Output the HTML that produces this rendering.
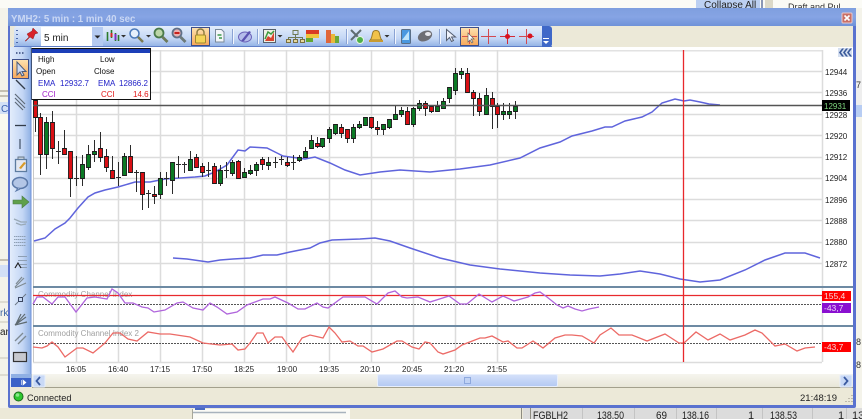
<!DOCTYPE html>
<html><head><meta charset="utf-8"><style>
html,body{margin:0;padding:0}
body{width:862px;height:419px;overflow:hidden;background:#f3f1e8;position:relative;font-family:"Liberation Sans",sans-serif}
svg{position:absolute;left:0;top:0;filter:blur(.35px)}
text{font-family:"Liberation Sans",sans-serif}
</style></head><body>
<svg width="862" height="419" viewBox="0 0 862 419">
<defs>
<linearGradient id="tb" x1="0" y1="0" x2="0" y2="1"><stop offset="0" stop-color="#7f9fdf"/><stop offset=".5" stop-color="#86a4e4"/><stop offset="1" stop-color="#6f92d8"/></linearGradient>
<linearGradient id="tool" x1="0" y1="0" x2="0" y2="1"><stop offset="0" stop-color="#e3edfb"/><stop offset=".6" stop-color="#c3d6f5"/><stop offset="1" stop-color="#8fb0e4"/></linearGradient>
<linearGradient id="side" x1="0" y1="0" x2="1" y2="0"><stop offset="0" stop-color="#e3edfb"/><stop offset=".6" stop-color="#c3d6f5"/><stop offset="1" stop-color="#8fb0e4"/></linearGradient>
<linearGradient id="or" x1="0" y1="0" x2="0" y2="1"><stop offset="0" stop-color="#fde2b0"/><stop offset="1" stop-color="#f7a85a"/></linearGradient>
<linearGradient id="sc" x1="0" y1="0" x2="0" y2="1"><stop offset="0" stop-color="#f6f5ee"/><stop offset="1" stop-color="#e8e6d8"/></linearGradient>
<linearGradient id="th" x1="0" y1="0" x2="0" y2="1"><stop offset="0" stop-color="#d5e1fa"/><stop offset="1" stop-color="#b3c9f3"/></linearGradient>
</defs>

<!-- underlying app -->
<rect x="0" y="0" width="862" height="419" fill="#f4f3ea"/>
<rect x="0" y="0" width="862" height="8" fill="#fbfbf6"/>
<rect x="696" y="0" width="64" height="8" fill="#bcd0f2"/>
<rect x="761" y="0" width="2" height="8" fill="#8a97b5"/>
<rect x="765" y="0" width="8" height="8" fill="#dcd9c8"/>
<text x="704" y="8" font-size="10" fill="#222">Collapse All</text>
<text x="788" y="10" font-size="9" fill="#333">Draft and Pul</text>
<path d="M0 91H8M0 96H8" stroke="#b5b0a0" stroke-width="1.5"/>
<rect x="0" y="102" width="8" height="12" fill="#d3e0f6"/>
<text x="1" y="112" font-size="10" fill="#3c63b0">C</text>
<rect x="0" y="114" width="8" height="16" fill="#faf9f0"/>
<path d="M0 260H8M0 266H8" stroke="#b5b0a0" stroke-width="1.5"/>
<rect x="0" y="265" width="8" height="12" fill="#d3e0f6"/>
<text x="0" y="316" font-size="10" fill="#3c63a0">rk</text>
<text x="0" y="335" font-size="10" fill="#222">ar</text>
<path d="M0 302H8M0 322H8M0 358H8M0 375H8" stroke="#c8c6b8"/>
<rect x="856" y="70" width="6" height="40" fill="#eeeeee"/>
<rect x="856" y="105" width="6" height="12" fill="#b8cdf3"/>
<text x="856" y="88" font-size="9" fill="#333">7</text>
<text x="856" y="345" font-size="9" fill="#333">8</text>
<text x="856" y="368" font-size="9" fill="#333">8</text>
<!-- bottom row -->
<rect x="0" y="408" width="862" height="11" fill="#ece9d8"/>
<rect x="192" y="409" width="158" height="10" fill="#fbfbf6"/>
<path d="M192.500 409V419" stroke="#a8a89a"/>
<rect x="195" y="407" width="10" height="3" fill="#4a6ac0"/>
<path d="M193 412.500H346" stroke="#a8b3bd" stroke-width="1.500"/>
<rect x="523" y="408" width="339" height="11" fill="#dcdcdc"/>
<path d="M521.500 408V419M530.500 408V419" stroke="#8d8b80"/>
<path d="M582.500 408V419M634.500 408V419M676.500 408V419M716.500 408V419M762.500 408V419M812.500 408V419M846.500 408V419" stroke="#c4c4c4"/>
<g font-size="11" fill="#222">
<text x="533" y="419" textLength="35" lengthAdjust="spacingAndGlyphs">FGBLH2</text>
<text x="597" y="419" textLength="27" lengthAdjust="spacingAndGlyphs">138.50</text>
<text x="656" y="419" textLength="11" lengthAdjust="spacingAndGlyphs">69</text>
<text x="682" y="419" textLength="27" lengthAdjust="spacingAndGlyphs">138.16</text>
<text x="748" y="419">1</text>
<text x="770" y="419" textLength="27" lengthAdjust="spacingAndGlyphs">138.53</text>
<text x="838" y="419">1</text>
<text x="852" y="419">13</text>
</g>

<!-- window -->
<rect x="8" y="8" width="848" height="400" rx="2" fill="#5a72cf"/>
<rect x="8" y="8" width="848" height="18" fill="url(#tb)"/>
<text x="11" y="22" font-size="9.700" font-weight="bold" fill="#c9d7f4">YMH2: 5 min : 1 min 40 sec</text>
<rect x="842" y="13" width="10" height="10" rx="1" fill="#c96f66" stroke="#e9c7c8"/>
<path d="M844.500 15.500l5 5M849.500 15.500l-5 5" stroke="#fff" stroke-width="1.600"/>
<rect x="10" y="26" width="843" height="379" fill="#ece9d8"/>

<!-- toolbar -->
<rect x="14" y="26" width="538" height="21" rx="3" fill="url(#tool)"/>
<path d="M14 46.500H552" stroke="#5f7fc8"/>
<path d="M17 30v1M17 34v1M17 38v1M17 42v1" stroke="#2f4f99" stroke-width="1.600"/>
<path d="M25 41l4-4-2-3 5-3 1-3 3 3 2 2-3 1-2 5-3-2-4 4z" fill="#d8232a" stroke="#8a2a2a" stroke-width=".5"/>
<rect x="41" y="27" width="52" height="19" fill="#fff"/>
<rect x="92" y="27" width="11" height="19" fill="#b5caf0"/>
<path d="M94.500 35.500h6l-3 3z" fill="#222"/>
<text x="44" y="41" font-size="10" fill="#222">5 min</text>
<!-- candles icon -->
<path d="M107.500 32V41M111.500 30V38M115.500 33V41M118.500 35V41" stroke="#2b7a2b" stroke-width="1.600"/>
<path d="M111.500 33V37" stroke="#d4261f" stroke-width="2"/><path d="M115.500 34V40" stroke="#7b2fbf" stroke-width="2"/>
<path d="M121 35h5l-2.500 2.500z" fill="#333"/>
<circle cx="134.500" cy="33.500" r="4.500" fill="#e6f0fb" stroke="#4a78b8" stroke-width="1.500"/><path d="M138 37l5 5" stroke="#7a7a50" stroke-width="2.500"/>
<path d="M146 35h5l-2.500 2.500z" fill="#333"/>
<circle cx="159" cy="33" r="4.500" fill="#bcd6a8" stroke="#4a7a4a" stroke-width="1.800"/><path d="M162.500 37l5 5" stroke="#6c7a5a" stroke-width="2.800"/>
<circle cx="177" cy="33" r="4.500" fill="#e9b0b0" stroke="#5f7088" stroke-width="1.800"/><path d="M174.500 33h5" stroke="#c8201c" stroke-width="2"/><path d="M180.500 37l5 5" stroke="#6c7a7a" stroke-width="2.800"/>
<rect x="191.500" y="27.500" width="18" height="18" fill="url(#or)" stroke="#3e4f8a"/>
<path d="M197 36v-3.500a3.500 3.500 0 0 1 7 0V36" fill="none" stroke="#8a7a40" stroke-width="1.400"/><rect x="195.500" y="35" width="10" height="8" rx="1" fill="#f4d458" stroke="#a08a30"/>
<path d="M215.500 29.500h6l2.500 2.500v10h-8.500z" fill="#f4f6fa" stroke="#7a8a9a"/><path d="M217.500 35h4M219 38h3" stroke="#3c9a4a" stroke-width="1.400"/>
<path d="M232.500 29V44" stroke="#8aa3d4"/><path d="M233.500 29V44" stroke="#f2f6fd"/>
<ellipse cx="245" cy="37" rx="6.500" ry="5" fill="#b4bcea" stroke="#6a62b8"/><path d="M241 41l8-10 2 1-7 9" fill="#5a52b0"/>
<path d="M257.500 29V44" stroke="#8aa3d4"/><path d="M258.500 29V44" stroke="#f2f6fd"/>
<rect x="263.500" y="29.500" width="12" height="13" fill="#eef0e4" stroke="#55606c"/><path d="M265 41l3-5 3 2 3-6v9z" fill="#d8452f"/><path d="M265 39l3-7 3 2 3-3" stroke="#3c9a3c" stroke-width="1.500" fill="none"/>
<path d="M277.500 35h5l-2.500 2.500z" fill="#333"/>
<path d="M293 30.500h5v4h-5zM295.500 34.500v3M288 37.500h15M288.500 37.500v2M295.500 37.500v2M302.500 37.500v2" fill="none" stroke="#6f7a55"/><path d="M286.500 39.500h4v3h-4zM293.500 39.500h4v3h-4zM300.500 39.500h4v3h-4z" fill="#e6d9a0" stroke="#7a7040"/>
<rect x="306" y="30" width="13" height="4" fill="#d93a24"/><rect x="306" y="34" width="13" height="4" fill="#f0c23c"/><rect x="306" y="38" width="7" height="4" fill="#62a832"/>
<rect x="326" y="30" width="5" height="13" fill="#e0663a"/><rect x="331" y="34" width="4" height="9" fill="#e8b83c"/><rect x="335" y="36" width="4" height="7" fill="#6aa838"/>
<path d="M346.500 29V44" stroke="#8aa3d4"/><path d="M347.500 29V44" stroke="#f2f6fd"/>
<path d="M351 30l10 10M361 30l-10 10" stroke="#5e6c70" stroke-width="2"/><circle cx="360" cy="40" r="3.500" fill="#4eb04a" stroke="#e6f5e0"/>
<path d="M370 40c2-1 2-6 3-8 1-2 5-2 6 0 1 2 1 7 3 8z" fill="#f1c24a" stroke="#9a7a2a"/><rect x="369" y="40" width="14" height="2" fill="#c89a30"/>
<path d="M384.500 35h5l-2.500 2.500z" fill="#333"/>
<path d="M394.500 29V44" stroke="#8aa3d4"/><path d="M395.500 29V44" stroke="#f2f6fd"/>
<rect x="401.500" y="29.500" width="9" height="14" rx="1" fill="#4a98e0" stroke="#5a6f88"/><path d="M402 40l7-9v9z" fill="#bfe4fb"/>
<ellipse cx="425" cy="36" rx="7.500" ry="5" transform="rotate(-25 425 36)" fill="#6e6e74"/><ellipse cx="428" cy="34" rx="3" ry="2" fill="#e8e8ee"/>
<path d="M439.500 29V44" stroke="#8aa3d4"/><path d="M440.500 29V44" stroke="#f2f6fd"/>
<path d="M446.500 29.500v11l3-3 2 4 2-1-2-3.500h4z" fill="#eef2fb" stroke="#565f70"/>
<rect x="460.500" y="27.500" width="18" height="18" fill="url(#or)" stroke="#3e4f8a"/>
<path d="M469.500 29V44M462 36.500H477" stroke="#d9544a"/><path d="M468 33v9l2-2 2 3 1-1-2-3h3z" fill="#fff" stroke="#666" stroke-width=".7"/>
<path d="M488.500 29V44M481 36.500H496" stroke="#d24a50"/>
<path d="M507.500 29V44M500 36.500H515" stroke="#d42a34"/><circle cx="507.500" cy="36.500" r="2.500" fill="#d8121e"/>
<path d="M526.500 29V44M519 36.500H534" stroke="#d24a50"/><circle cx="530" cy="36" r="2.500" fill="#d8121e"/>
<path d="M542 26h7a3 3 0 0 1 3 3v15a3 3 0 0 1-3 3h-7z" fill="#3f68c8"/>
<rect x="543" y="38" width="6" height="1" fill="#fff"/><path d="M543 41h6l-3 3z" fill="#fff"/>
<rect x="552" y="26" width="301" height="21" fill="#ece9d8"/>

<!-- chart -->
<rect x="31" y="47" width="822" height="327" fill="#fff"/>
<rect x="33" y="50" width="790" height="1.500" fill="#e2e2e2"/>
<path d="M76.500 50V362M118.500 50V362M160.500 50V362M202.500 50V362M244.500 50V362M286.500 50V362M329.500 50V362M371.500 50V362M413.500 50V362M455.500 50V362M497.500 50V362M822.500 50V362" stroke="#dcdcdc" stroke-width="1.500"/>
<path d="M33 71.500H822M33 92.500H822M33 114.500H822M33 135.500H822M33 157.500H822M33 178.500H822M33 199.500H822M33 220.500H822M33 242.500H822M33 263.500H822M33 362.500H822" stroke="#dcdcdc" stroke-width="1.500"/>
<path d="M33.500 50V362" stroke="#c8c8c8"/>

<!-- second blue -->
<path fill="none" stroke="#5f64dc" stroke-width="1.500" d="M173 258L187 259 208 262 220 260 233 259 250 258 263 255 277 255 290 252 310 248 320 243 332 240 360 239 375 238 390 241 410 248 440 258 470 265 500 269 540 273 570 275 600 276 620 274 640 271 660 274 680 279 700 282 720 280 745 270 765 260 785 253 805 253 820 258"/>
<!-- main blue -->
<path fill="none" stroke="#5f64dc" stroke-width="1.500" d="M34 241L45 238 55 229 65 223 70 218 78 208 88 197 95 193 105 190 118 187 135 182 150 182 165 179 180 178 195 177 205 176 215 172 227 165 238 150 245 151 250 147 267 148 277 153 283 156 290 157 305 159 315 157 330 163 345 170 360 175 380 172 400 170 430 172 460 169 490 165 520 158 540 148 560 142 572 136 592 131 605 127 612 127 625 121 642 117 652 112 662 103 675 99 684 101 690 100 700 102 709 104 720 105"/>

<!-- wicks -->
<path fill="none" stroke="#2b2b2b" d="M35.500 100V132M40.500 113V175M46.500 117V169M52.500 111V159M58.500 141V164M64.500 130V154M70.500 151V197M76.500 156V186M82.500 155V186M88.500 145V170M94.500 140V162M100.500 132V162M106.500 149V172M112.500 156V178M118.500 162V186M124.500 153V175M130.500 145V172M136.500 170V192M142.500 172V210M148.500 190V208M154.500 186V204M160.500 172V199M166.500 172V186M172.500 162V194M178.500 156V178M184.500 162V173M190.500 151V171M196.500 154V167M202.500 163V177M208.500 162V177M214.500 163V184M220.500 165V186M226.500 162V178M232.500 160V176M238.500 160V178M244.500 168V177M250.500 165V175M256.500 162V176M262.500 157V170M268.500 157V170M275.500 157V168M281.500 156V165M287.500 157V167M293.500 155V170M299.500 155V162M305.500 147V157M311.500 135V148M317.500 137V148M322.500 138V148M329.500 127V143M335.500 124V135M341.500 124V138M347.500 129V143M353.500 124V143M359.500 121V129M365.500 117V125M371.500 117V129M377.500 121V135M383.500 124V135M389.500 119V129M395.500 106V119M401.500 107V117M407.500 107V124M413.500 107V127M419.500 100V111M425.500 101V116M431.500 106V113M437.500 101V112M443.500 98V108M449.500 87V103M455.500 68V95M461.500 68V79M467.500 68V92M473.500 90V116M479.500 93V116M486.500 88V114M492.500 92V129M497.500 103V128M503.500 103V120M509.500 103V119M515.500 101V119M56 151.500h5M74 178.500h5M116 177.500h5M134 172.500h5M146 193.500h5M164 178.500h5M176 164.500h5M182 164.500h5M206 170.500h5M224 170.500h5M273 162.500h5M279 159.500h5M291 162.500h5"/>
<!-- green bodies -->
<path fill="#0b7a24" stroke="#1c1c1c" stroke-width=".9" d="M44.500 122.500h4v32h-4zM80.500 164.500h4v14h-4zM86.500 154.500h4v13h-4zM92.500 151.500h4v3h-4zM122.500 156.500h4v19h-4zM158.500 178.500h4v16h-4zM170.500 162.500h4v18h-4zM188.500 159.500h4v11h-4zM218.500 170.500h4v13h-4zM230.500 162.500h4v11h-4zM242.500 172.500h4v5h-4zM248.500 170.500h4v3h-4zM254.500 164.500h4v6h-4zM266.500 162.500h4v3h-4zM297.500 157.500h4v3h-4zM303.500 151.500h4v6h-4zM309.500 140.500h4v8h-4zM320.500 138.500h4v8h-4zM327.500 129.500h4v9h-4zM333.500 124.500h4v9h-4zM351.500 127.500h4v11h-4zM357.500 124.500h4v3h-4zM363.500 117.500h4v8h-4zM381.500 124.500h4v5h-4zM387.500 119.500h4v8h-4zM393.500 114.500h4v5h-4zM399.500 110.500h4v4h-4zM411.500 108.500h4v16h-4zM417.500 103.500h4v5h-4zM435.500 106.500h4v5h-4zM441.500 101.500h4v7h-4zM447.500 87.500h4v11h-4zM453.500 73.500h4v17h-4zM459.500 71.500h4v3h-4zM484.500 95.500h4v19h-4zM501.500 111.500h4v3h-4zM507.500 111.500h4v3h-4zM513.500 106.500h4v5h-4z"/>
<!-- red bodies -->
<path fill="#d90f14" stroke="#1c1c1c" stroke-width=".9" d="M33.500 100.500h4v17h-4zM38.500 117.500h4v37h-4zM50.500 122.500h4v26h-4zM62.500 148.500h4v6h-4zM68.500 151.500h4v27h-4zM98.500 148.500h4v9h-4zM104.500 156.500h4v11h-4zM110.500 170.500h4v8h-4zM128.500 156.500h4v16h-4zM140.500 172.500h4v22h-4zM152.500 194.500h4v2h-4zM194.500 157.500h4v10h-4zM200.500 166.500h4v6h-4zM212.500 166.500h4v17h-4zM236.500 161.500h4v17h-4zM260.500 159.500h4v5h-4zM285.500 162.500h4v3h-4zM315.500 143.500h4v3h-4zM339.500 127.500h4v6h-4zM345.500 129.500h4v9h-4zM369.500 117.500h4v10h-4zM375.500 127.500h4v2h-4zM405.500 111.500h4v13h-4zM423.500 103.500h4v5h-4zM429.500 106.500h4v5h-4zM465.500 73.500h4v19h-4zM471.500 92.500h4v6h-4zM477.500 98.500h4v13h-4zM490.500 98.500h4v8h-4zM495.500 106.500h4v8h-4z"/>

<!-- price line -->
<path d="M33 105.500H823" stroke="#555" stroke-width="1.500"/>

<!-- panels -->
<rect x="33" y="286" width="820" height="2" fill="#6d8aa3"/>
<rect x="33" y="325" width="820" height="2" fill="#6d8aa3"/>
<text x="38" y="297" font-size="8" fill="#a0a0a0">Commodity Channel Index</text>
<text x="38" y="336" font-size="8" fill="#a0a0a0">Commodity Channel Index 2</text>
<path d="M33 304.500H822M33 343.500H822" stroke="#555" stroke-dasharray="2 1"/>
<path d="M33 295.500H822" stroke="#e82a2e" stroke-width="1.300"/>
<path fill="none" stroke="#b065dc" stroke-width="1.300" d="M33 304L37 297 43 297 52 304 58 297 65 297 76 312 87 298 95 297 107 299 112 289 118 293 125 303 133 303 142 307 148 308 154 312 165 310 177 303 183 302 193 308 203 310 210 303 217 307 227 314 237 312 247 305 263 299 270 299 275 297 288 303 298 309 305 309 317 303 323 307 328 308 343 297 365 297 377 304 388 293 395 291 402 297 407 298 418 297 430 302 449 296 460 304 467 304 479 294 492 302 503 296 514 301 528 297 535 293 540 292 547 297 557 305 563 308 568 306 575 309 582 311 589 309 599 307"/>
<path fill="none" stroke="#ec6a66" stroke-width="1.300" d="M33 347L42 348 47 346 52 342 58 347 65 357 77 348 83 348 93 353 105 343 113 333 120 333 128 339 137 341 148 332 160 334 170 334 190 337 203 343 220 345 232 344 238 350 245 349 250 343 257 333 263 333 268 343 275 337 282 337 290 348 293 352 302 338 310 335 323 338 329 327 335 333 342 342 350 341 358 346 363 346 372 352 383 349 397 341 402 341 412 347 419 349 425 342 430 343 438 352 443 354 455 350 462 345 480 338 485 338 492 336 503 342 508 341 517 348 522 348 533 341 543 348 555 338 565 335 572 335 582 336 594 343 600 335 611 328 619 335 632 335 647 341 665 334 679 343 684 343 696 332 708 340 720 334 730 340 745 335 755 330 762 333 775 346 785 344 797 351 805 348 815 347"/>

<!-- red vertical cursor -->
<path d="M683.500 50V362" stroke="#e8282c" stroke-width="1.300"/>

<!-- axis -->
<rect x="838" y="48" width="14" height="9" fill="#d5dff0"/>
<path d="M842 48.500l-3 4 3 4h2l-3-4 3-4zM846 48.500l-3 4 3 4h2l-3-4 3-4zM850 48.500l-3 4 3 4h2l-3-4 3-4z" fill="#3a5a9a"/>
<g font-size="8" fill="#222">
<text x="825" y="75">12944</text>
<text x="825" y="96">12936</text>
<text x="825" y="118">12928</text>
<text x="825" y="139">12920</text>
<text x="825" y="160">12912</text>
<text x="825" y="181">12904</text>
<text x="825" y="203">12896</text>
<text x="825" y="224">12888</text>
<text x="825" y="245">12880</text>
<text x="825" y="267">12872</text>
</g>
<rect x="822" y="100" width="28" height="11" fill="#000"/>
<text x="824" y="109" font-size="8" fill="#7fd87f">12931</text>
<rect x="822" y="291" width="29" height="10" fill="#f00"/>
<text x="824" y="299" font-size="8.500" fill="#f5dada">155,4</text>
<rect x="822" y="303" width="29" height="10" fill="#8a10d0"/>
<text x="824" y="311" font-size="8.500" fill="#ecd8f6">-43,7</text>
<rect x="822" y="342" width="29" height="10" fill="#f00"/>
<text x="824" y="350" font-size="8.500" fill="#f5dada">-43,7</text>

<g font-size="8" fill="#222">
<text x="66" y="372">16:05</text>
<text x="108" y="372">16:40</text>
<text x="150" y="372">17:15</text>
<text x="192" y="372">17:50</text>
<text x="234" y="372">18:25</text>
<text x="277" y="372">19:00</text>
<text x="319" y="372">19:35</text>
<text x="360" y="372">20:10</text>
<text x="402" y="372">20:45</text>
<text x="444" y="372">21:20</text>
<text x="487" y="372">21:55</text>
</g>

<!-- tooltip -->
<rect x="31.500" y="48.500" width="119" height="51" fill="#fff" stroke="#111"/>
<rect x="32" y="49" width="118" height="4" fill="#1c3fb8"/>
<g font-size="8">
<text x="38" y="62" fill="#111">High</text>
<text x="100" y="62" fill="#111">Low</text>
<text x="36" y="74" fill="#111">Open</text>
<text x="94" y="74" fill="#111">Close</text>
<text x="38" y="86" fill="#2222c8">EMA</text>
<text x="60" y="86" fill="#2222c8">12932.7</text>
<text x="98" y="86" fill="#2222c8">EMA</text>
<text x="119" y="86" fill="#2222c8">12866.2</text>
<text x="42" y="97" fill="#a020c8">CCI</text>
<text x="101" y="97" fill="#e01818">CCI</text>
<text x="133" y="97" fill="#e01818">14.6</text>
</g>

<!-- left toolbar -->
<rect x="10" y="47" width="21" height="340" fill="url(#side)"/>
<path d="M31 47V387" stroke="#6f92d8"/>
<rect x="11" y="378" width="20" height="9" fill="#3a62c8"/>
<rect x="11" y="374" width="20" height="4" fill="#8fb0e4"/>
<path d="M23 380v5l3-2.500zM21.500 380v5" fill="#fff" stroke="#fff" stroke-width=".6"/>
<path d="M16 53h1.500M19 53h1.500M22 53h1.500" stroke="#33467a" stroke-width="1.500"/>
<rect x="12.500" y="59.500" width="16" height="19" fill="url(#or)" stroke="#3e4f8a"/>
<path d="M17 62v13l3-3 2 4 2-1-2-3.500h4z" fill="#cdd9f0" stroke="#4a5a78"/>
<path d="M16 80l9 9" stroke="#333c4a" stroke-width="1.300"/>
<path d="M15 94l10 10M15 98l10 10M15 102l8 8" stroke="#5f6b78" stroke-width="1.200"/>
<path d="M15 125.500H26" stroke="#333c4a" stroke-width="1.300"/>
<path d="M20 139V149" stroke="#5b6b80" stroke-width="1.500"/>
<path d="M15.500 159.500h11v12h-11z" fill="#e3e8f2" stroke="#5d7ca0" stroke-width="1.300"/>
<path d="M18 159v-2h6v2" fill="#c0ccd8" stroke="#6a7a8a"/>
<path d="M19 168l5-6 2 1-5 6z" fill="#d89a28"/>
<ellipse cx="20" cy="183" rx="7.500" ry="5.500" fill="#b3c6e6" stroke="#5b79a8" stroke-width="1.500"/>
<path d="M18 188l-2 3 4-2" fill="#b3c6e6" stroke="#5b79a8"/>
<path d="M13 200h9v-4l7 6-7 6v-4h-9z" fill="#5fa04a" stroke="#4a7a48" stroke-width=".6"/>
<path d="M14 219l7 3 6 0M16 223l5 2 5-1" stroke="#99a9b6" stroke-width="1.300" fill="none"/>
<path d="M14 236.500H26M14 239.500H26M14 242.500H26M14 245.500H26" stroke="#8e9fb4" stroke-dasharray="1.500 .5"/>
<path d="M18 256.500H27M18 260.500H27M20 264.500H27M20 267.500H27" stroke="#8e9fb4"/>
<path d="M15 268l3-5 3 5" fill="none" stroke="#222" stroke-width="1.200"/>
<path d="M15 287l9-9M15 288l11-5M16 284l6-7" stroke="#7e8a92" stroke-width="1.200"/>
<path d="M15 305l3-3" stroke="#6e7a88"/><rect x="18.500" y="297.500" width="4" height="4" fill="none" stroke="#3a4660"/><path d="M23 297l3-3" stroke="#6e7a88"/>
<path d="M15 325l10-11M15 325l11-8M15 325l12-3M16 324l5-10" stroke="#5e6a70" stroke-width="1.200"/>
<path d="M15 341l8-8M18 344l8-8" stroke="#7e8a92" stroke-width="1.300"/>
<rect x="13.500" y="352.500" width="13" height="9" fill="#c7c9cf" stroke="#333" stroke-width="1.200"/>

<!-- scrollbar -->
<rect x="32" y="374" width="821" height="13" fill="url(#sc)"/>
<path d="M32 387.500H853" stroke="#a3a08c"/>
<rect x="33" y="375" width="12" height="12" rx="1" fill="#c9d9f6" stroke="#e5edfb"/>
<path d="M40 377l-3.500 4 3.500 4" fill="none" stroke="#3a5aa0" stroke-width="1.800"/>
<rect x="840" y="375" width="12" height="12" rx="1" fill="#c9d9f6" stroke="#e5edfb"/>
<path d="M844 377l3.500 4-3.500 4" fill="none" stroke="#3a5aa0" stroke-width="1.800"/>
<rect x="377.500" y="374.500" width="180" height="12" rx="1.500" fill="url(#th)" stroke="#e8effc"/>
<rect x="464.500" y="377.500" width="6" height="6" fill="#c0d2f4" stroke="#8ea9de"/>

<!-- status bar -->
<rect x="10" y="388" width="843" height="17" fill="#ece9d8"/>
<circle cx="18.500" cy="396.500" r="4.500" fill="#2fc82f" stroke="#1d6b1d"/>
<circle cx="17.500" cy="395" r="1.800" fill="#8ae88a"/>
<text x="27" y="401" font-size="9.200" fill="#222">Connected</text>
<text x="800" y="401" font-size="9.500" fill="#222">21:48:19</text>
<path d="M852 395v1M849 398v1M852 398v1M846 401v1M849 401v1M852 401v1" stroke="#aaa69a" stroke-width="1.400"/>
</svg>
</body></html>
